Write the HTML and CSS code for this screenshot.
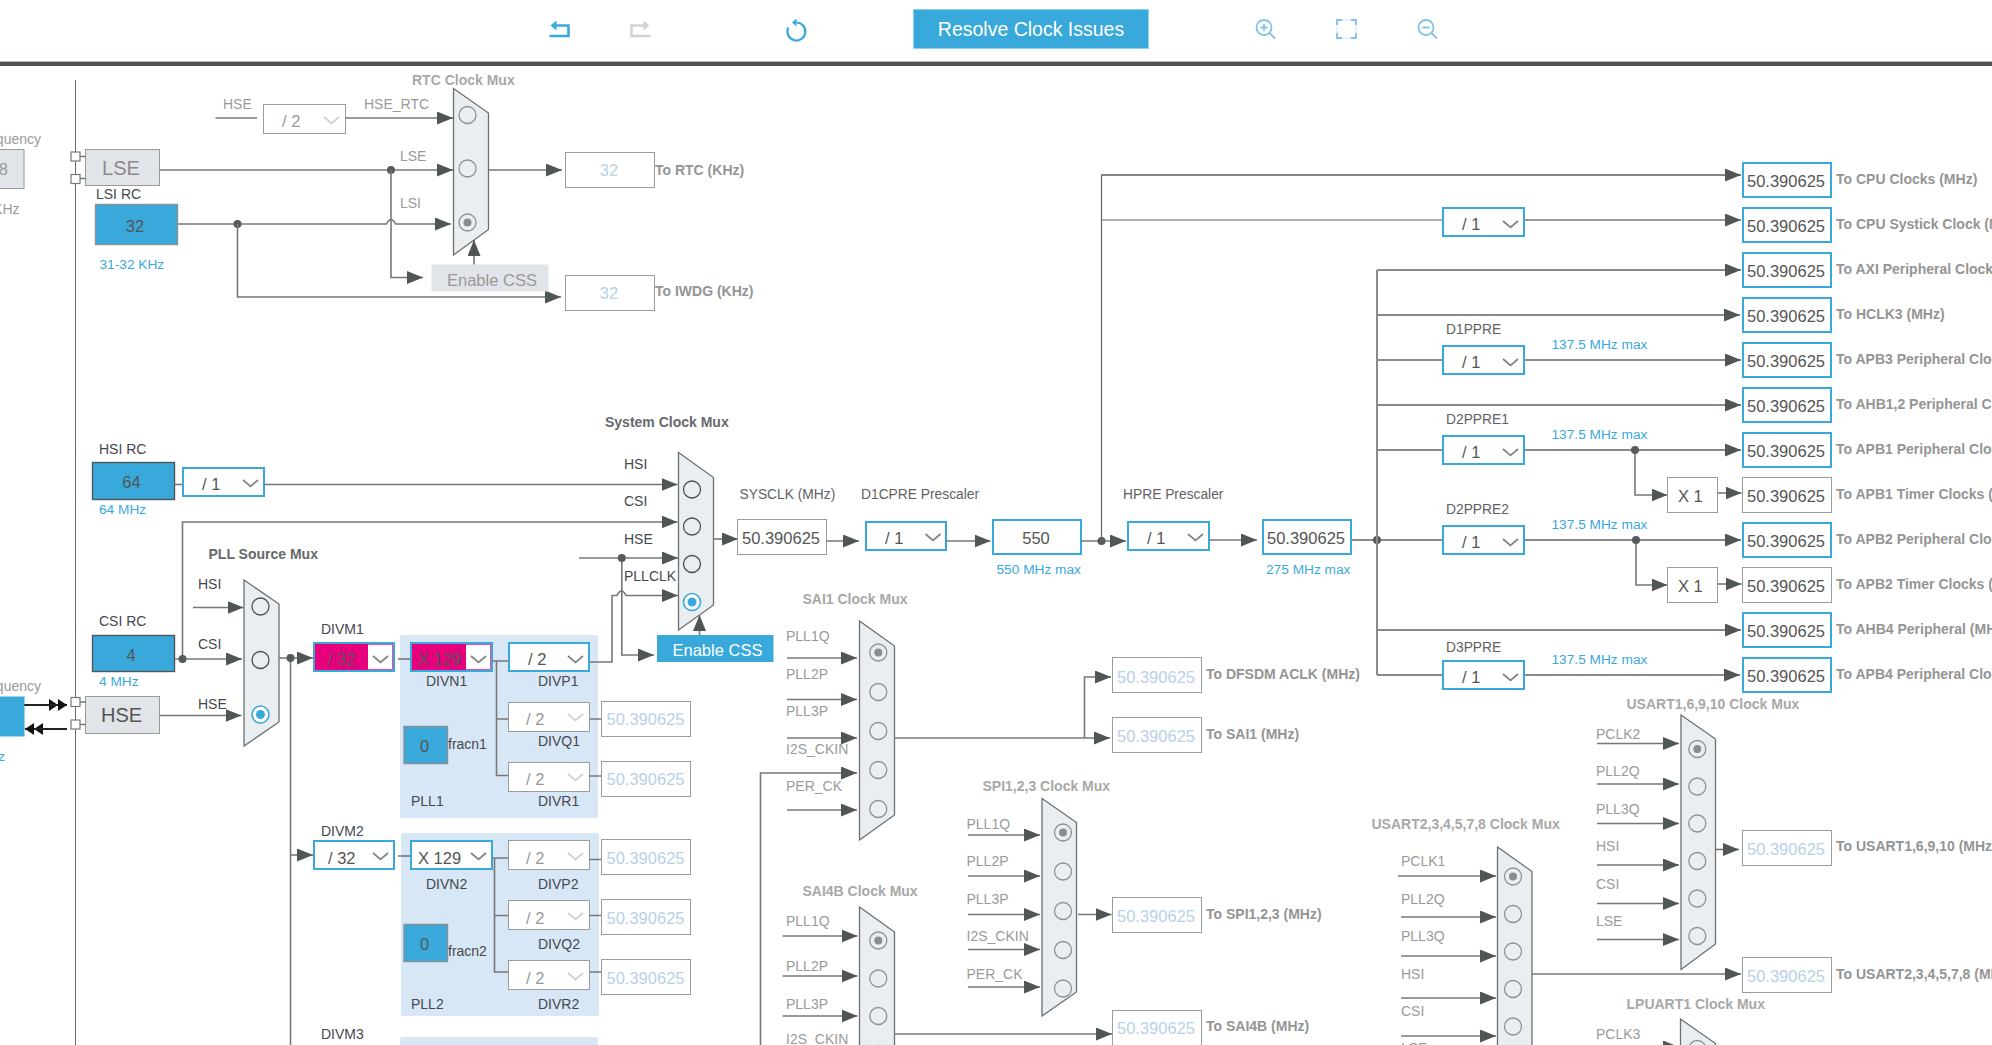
FILE: index.html
```html
<!DOCTYPE html>
<html lang="en">
<head>
<meta charset="utf-8">
<title>Clock Configuration</title>
<link rel="stylesheet" href="styles.css">
</head>
<body>
<header class="toolbar">
  <div class="history">
    <svg class="icon" width="21" height="18" viewBox="0 0 21 18"><path class="ib" d="M5 5.5H19.5V16H0.5"/><path class="if" d="M7.5 0.5 1.5 5.5 7.5 10.5z"/></svg>
    <svg class="icon off" width="21" height="18" viewBox="0 0 21 18"><path class="ig" d="M16 5.5H1.5V16H20.5"/><path class="igf" d="M13.5 0.5 19.5 5.5 13.5 10.5z"/></svg>
  </div>
  <svg class="icon refresh" width="21" height="24" viewBox="0 0 21 24"><path class="ib thin" d="M10.5 4.5A9 9 0 1 1 2.3 9.5"/><path class="if" d="M10.5 0.5V8.5L6 4.5z"/></svg>
  <button class="resolve" type="button">Resolve Clock Issues</button>
  <div class="zooms">
    <svg class="icon" width="21" height="20" viewBox="0 0 21 20"><circle class="iz" cx="9" cy="8.5" r="7.5"/><path class="iz" d="M14.5 14 20 19.500M5.500 8.500H12.500M9 5V12"/></svg>
    <svg class="icon" width="21" height="20" viewBox="0 0 21 20"><path class="iz dash" d="M1 1H20V19H1Z"/><path class="iz" d="M1 6V1H6M15 1H20V6M20 14V19H15M6 19H1V14"/></svg>
    <svg class="icon" width="21" height="20" viewBox="0 0 21 20"><circle class="iz" cx="9" cy="8.5" r="7.5"/><path class="iz" d="M14.5 14 20 19.500M5.500 8.500H12.500"/></svg>
  </div>
</header>
<main class="canvas">
<svg class="diagram" width="1992" height="979" viewBox="0 66 1992 979" xmlns="http://www.w3.org/2000/svg">
<defs>
  <marker id="ah" markerUnits="userSpaceOnUse" markerWidth="17" markerHeight="13" viewBox="0 0 17 13" refX="16" refY="6.500" orient="auto"><path class="head" d="M0 0 16 6.500 0 13z"/></marker>
  <marker id="abk" markerUnits="userSpaceOnUse" markerWidth="10" markerHeight="13" viewBox="0 0 10 13" refX="9" refY="6.500" orient="auto"><path class="headk" d="M0 0.5 9 6.500 0 12.500z"/></marker>
  <path id="ch" d="M0 0 7.500 6.500 15 0"/>
</defs>

<!-- left edge -->
<path class="edge" d="M75.500 80V1045"/>
<rect class="chip" x="-2" y="149.500" width="26" height="39"/>
<text class="v mute" x="8" y="175" text-anchor="end">32.768</text>
<text class="gl" x="41" y="144" text-anchor="end">Input frequency</text>
<text class="gl" x="19.500" y="214" text-anchor="end">32 KHz</text>
<rect class="chip" x="85.500" y="149.500" width="74" height="36"/>
<text class="pin mute" x="121" y="175" text-anchor="middle">LSE</text>
<path class="w" d="M80 156.500H86M80 178.500H86"/>
<rect class="sq" x="71" y="152" width="9" height="9"/><rect class="sq" x="71" y="174.500" width="9" height="9"/>

<text class="lb" x="96" y="199">LSI RC</text>
<rect class="src soft" x="95.500" y="204.500" width="82" height="40"/>
<text class="v" x="135" y="232" text-anchor="middle">32</text>
<text class="bl" x="99.500" y="269">31-32 KHz</text>

<!-- RTC mux -->
<text class="tt off" x="412" y="85">RTC Clock Mux</text>
<text class="gl" x="223" y="109">HSE</text>
<path class="w" d="M215.500 118H257"/>
<rect class="dd-off" x="263.500" y="104.500" width="82" height="29"/>
<text class="v mute" x="282" y="127">/ 2</text>
<use href="#ch" class="chv-off" x="324" y="117"/>
<text class="gl" x="364" y="109">HSE_RTC</text>
<path class="w a" d="M345.500 118H453"/>
<text class="gl" x="400" y="161">LSE</text>
<path class="w a" d="M159.500 170H453"/>
<circle class="dot" cx="391" cy="170" r="4"/>
<text class="gl" x="400" y="208">LSI</text>
<path class="w a" d="M177.500 224H386.500q4.500-9 9 0H451"/>
<circle class="dot" cx="237.500" cy="224" r="4"/>
<path class="w a" d="M391 170V277.500H423"/>
<path class="w a" d="M237.500 224V297H561"/>
<polygon class="mux" points="453.500,88.500 488.500,113 488.500,229.500 453.500,255"/>
<circle class="c" cx="467.500" cy="115" r="8.500"/><circle class="c" cx="467.500" cy="168.500" r="8.500"/><circle class="c" cx="467.500" cy="222.500" r="8.500"/><circle class="cd" cx="467.500" cy="222.500" r="4"/>
<rect class="css-off" x="431.500" y="264.500" width="117" height="27"/>
<text class="v mute" x="447" y="286">Enable CSS</text>
<path class="w a" d="M474 264.500V240"/>
<path class="w a" d="M488.500 170H562"/>
<rect class="vb" x="565.500" y="152.500" width="89" height="35"/><text class="vd" x="609" y="176" text-anchor="middle">32</text>
<text class="to" x="655" y="175">To RTC (KHz)</text>
<rect class="vb" x="565.500" y="275.500" width="89" height="35"/><text class="vd" x="609" y="299" text-anchor="middle">32</text>
<text class="to" x="655" y="296">To IWDG (KHz)</text>

<!-- HSI / CSI / HSE sources -->
<text class="lb" x="99" y="454">HSI RC</text>
<rect class="src" x="92.500" y="462.500" width="82" height="37"/>
<text class="v" x="131.500" y="488" text-anchor="middle">64</text>
<text class="bl" x="99" y="514">64 MHz</text>
<path class="w" d="M174.500 484.500H183"/>
<rect class="dd" x="183" y="468" width="81" height="28"/>
<text class="v" x="202" y="490">/ 1</text>
<use href="#ch" class="chv" x="243" y="480"/>
<path class="w a" d="M264.500 484.500H677.500"/>
<path class="w a" d="M182.500 659V522H677.500"/>
<text class="lb" x="99" y="626">CSI RC</text>
<rect class="src" x="92.500" y="635.500" width="82" height="36"/>
<text class="v" x="131" y="661" text-anchor="middle">4</text>
<text class="bl" x="99" y="686">4 MHz</text>
<rect class="chip" x="85.500" y="696.500" width="74" height="37"/>
<text class="pin" x="121.500" y="722" text-anchor="middle">HSE</text>
<path class="w" d="M80 702H86M80 724.500H86"/>
<rect class="sq" x="71" y="697.500" width="9" height="9"/><rect class="sq" x="71" y="720" width="9" height="9"/>
<rect class="src-plain" x="-2" y="696.500" width="26.500" height="40"/>
<text class="gl" x="41" y="691" text-anchor="end">Input frequency</text>
<text class="bl" x="5" y="761" text-anchor="end">4-48 MHz</text>
<path class="wk ak" d="M24.500 705H58"/><path class="wk ak" d="M24.500 705H67"/>
<path class="wk ak" d="M67 729H34"/><path class="wk ak" d="M67 729H25"/>

<!-- PLL source mux -->
<text class="tt" x="208.500" y="559">PLL Source Mux</text>
<text class="lb" x="198" y="589">HSI</text><path class="w a" d="M193 607.500H243.500"/>
<text class="lb" x="198" y="649">CSI</text><path class="w a" d="M174.500 659H242"/>
<circle class="dot" cx="182.500" cy="659" r="4"/>
<text class="lb" x="198" y="709">HSE</text><path class="w a" d="M159.500 715.500H241.500"/>
<polygon class="mux" points="244,580 279,604 279,722 244,746"/>
<circle class="c dk" cx="260.500" cy="606.500" r="8.500"/><circle class="c dk" cx="260.500" cy="660" r="8.500"/><circle class="cb" cx="260.500" cy="714.500" r="8.500"/><circle class="cbd" cx="260.500" cy="714.500" r="4.500"/>
<path class="w" d="M279 658H291"/>
<path class="w a" d="M290.500 658H313"/>
<path class="w" d="M290.500 658V1045"/>
<circle class="dot" cx="290.500" cy="658" r="4"/>
<path class="w a" d="M290.500 855H313"/>

<!-- PLL1 -->
<rect class="pll" x="400" y="635" width="198" height="183" rx="2"/>
<text class="lb" x="321" y="634">DIVM1</text>
<rect class="dd" x="314" y="643" width="80" height="28"/>
<rect class="err" x="315.500" y="644.500" width="77" height="25"/><rect class="errf" x="315" y="644" width="53" height="26"/>
<text class="v" x="328" y="665">/ 32</text>
<use href="#ch" class="chv" x="373" y="656"/>
<path class="w" d="M398 659H410"/>
<rect class="dd" x="411" y="643" width="81" height="28"/>
<rect class="err" x="412.500" y="644.500" width="78" height="25"/><rect class="errf" x="412" y="644" width="54" height="26"/>
<text class="v" x="418" y="665">X 129</text>
<use href="#ch" class="chv" x="471" y="656"/>
<text class="lb" x="426" y="686">DIVN1</text>
<path class="w" d="M492.500 661H509M496.500 661V775.500H509M496.500 719H509"/>
<rect class="dd" x="509" y="643" width="80" height="28"/>
<text class="v" x="528" y="665">/ 2</text>
<use href="#ch" class="chv" x="568" y="656"/>
<text class="lb" x="538" y="686">DIVP1</text>
<rect class="dd-off" x="508.500" y="702.500" width="81" height="29"/>
<text class="v mute" x="526" y="725">/ 2</text>
<use href="#ch" class="chv-off" x="568" y="714"/>
<text class="lb" x="538" y="746">DIVQ1</text>
<rect class="dd-off" x="508.500" y="762.500" width="81" height="29"/>
<text class="v mute" x="526" y="785">/ 2</text>
<use href="#ch" class="chv-off" x="568" y="774"/>
<text class="lb" x="538" y="806">DIVR1</text>
<rect class="src soft" x="404" y="726.500" width="43.500" height="37"/>
<text class="v" x="424.500" y="752" text-anchor="middle">0</text>
<text class="lb" x="448" y="749">fracn1</text>
<text class="lb" x="411" y="806">PLL1</text>
<path class="w" d="M589.500 719H601M589.500 776H601"/>
<rect class="vb" x="601.500" y="701.500" width="89" height="35"/><text class="vd" x="606.500" y="725">50.390625</text>
<rect class="vb" x="601.500" y="761.500" width="89" height="35"/><text class="vd" x="606.500" y="785">50.390625</text>

<!-- PLL2 -->
<rect class="pll" x="401" y="833" width="198" height="183" rx="2"/>
<text class="lb" x="321" y="836">DIVM2</text>
<rect class="dd" x="314" y="841" width="80" height="28"/>
<text class="v" x="328" y="863.500">/ 32</text>
<use href="#ch" class="chv" x="373" y="853"/>
<path class="w" d="M398 856H410"/>
<rect class="dd" x="411" y="841" width="81" height="28"/>
<text class="v" x="418" y="863.500">X 129</text>
<use href="#ch" class="chv" x="471" y="853"/>
<text class="lb" x="426" y="889">DIVN2</text>
<path class="w" d="M492.500 858H508M494.500 858V972H508M494.500 915.500H508"/>
<rect class="dd-off" x="508.500" y="840.500" width="81" height="29"/>
<text class="v mute" x="526" y="863.500">/ 2</text>
<use href="#ch" class="chv-off" x="568" y="853"/>
<text class="lb" x="538" y="889">DIVP2</text>
<rect class="dd-off" x="508.500" y="900.500" width="81" height="29"/>
<text class="v mute" x="526" y="923.500">/ 2</text>
<use href="#ch" class="chv-off" x="568" y="913"/>
<text class="lb" x="538" y="949">DIVQ2</text>
<rect class="dd-off" x="508.500" y="960.500" width="81" height="29"/>
<text class="v mute" x="526" y="983.500">/ 2</text>
<use href="#ch" class="chv-off" x="568" y="973"/>
<text class="lb" x="538" y="1009">DIVR2</text>
<rect class="src soft" x="404" y="924.500" width="43.500" height="37"/>
<text class="v" x="424.500" y="950" text-anchor="middle">0</text>
<text class="lb" x="448" y="956">fracn2</text>
<text class="lb" x="411" y="1009">PLL2</text>
<path class="w" d="M589.500 859.500H601M589.500 915.500H601M589.500 972H601"/>
<rect class="vb" x="601.500" y="839.500" width="89" height="35"/><text class="vd" x="606.500" y="863.500">50.390625</text>
<rect class="vb" x="601.500" y="899.500" width="89" height="35"/><text class="vd" x="606.500" y="923.500">50.390625</text>
<rect class="vb" x="601.500" y="959.500" width="89" height="35"/><text class="vd" x="606.500" y="983.500">50.390625</text>

<!-- PLL3 -->
<text class="lb" x="321" y="1039">DIVM3</text>
<rect class="pll" x="400" y="1037" width="198" height="40" rx="2"/>

<!-- System clock mux -->
<text class="tt" x="605" y="427">System Clock Mux</text>
<text class="lb" x="624" y="469">HSI</text>
<text class="lb" x="624" y="506">CSI</text>
<text class="lb" x="624" y="543.500">HSE</text>
<text class="lb" x="624" y="581">PLLCLK</text>
<path class="w a" d="M579 558H678"/>
<path class="w a" d="M589.500 662H612V595.500H617q4.500-9 9 0H678"/>
<path class="w a" d="M621.800 558V655H654"/>
<circle class="dot" cx="621.800" cy="558" r="4"/>
<polygon class="mux" points="678.500,452.500 713.500,477.500 713.500,605 678.500,630"/>
<circle class="c dk" cx="692" cy="489.500" r="8.500"/><circle class="c dk" cx="692" cy="526.500" r="8.500"/><circle class="c dk" cx="692" cy="564" r="8.500"/><circle class="cb" cx="692" cy="602" r="8.500"/><circle class="cbd" cx="692" cy="602" r="4.500"/>
<path class="w a" d="M699.500 635V615"/>
<rect class="css" x="657" y="635" width="116.500" height="27"/>
<text class="css-t" x="672.500" y="656">Enable CSS</text>
<path class="w a" d="M713.500 539H738"/>
<text class="lb2" x="739.500" y="499">SYSCLK (MHz)</text>
<text class="lb2" x="861" y="499">D1CPRE Prescaler</text>
<text class="lb2" x="1123" y="499">HPRE Prescaler</text>
<rect class="vb" x="737.500" y="519.500" width="89" height="35"/><text class="v" x="742" y="544">50.390625</text>
<path class="w a" d="M826.500 541H859"/>
<rect class="dd" x="866" y="522" width="80" height="28"/>
<text class="v" x="885" y="543.500">/ 1</text>
<use href="#ch" class="chv" x="925.500" y="534"/>
<path class="w a" d="M946.500 541H990.500"/>
<rect class="vbb" x="993" y="520" width="88" height="34"/><text class="v" x="1036" y="544" text-anchor="middle">550</text>
<text class="bl" x="996.500" y="574">550 MHz max</text>
<path class="w a" d="M1081 541H1126"/>
<circle class="dot" cx="1101.500" cy="541" r="4"/>
<path class="thin-w" d="M1101.500 541V175H1741"/>
<path class="thin-w" d="M1101.500 220H1442"/>
<rect class="dd" x="1128" y="522" width="81" height="28"/>
<text class="v" x="1147" y="543.500">/ 1</text>
<use href="#ch" class="chv" x="1188" y="534"/>
<path class="w a" d="M1209.500 540H1257"/>
<rect class="vbb" x="1263" y="520" width="88" height="34"/><text class="v" x="1267" y="544">50.390625</text>
<text class="bl" x="1266" y="574">275 MHz max</text>
<path class="w2" d="M1351.500 540H1442"/>
<circle class="dot" cx="1377" cy="540" r="4"/>

<!-- Right column: bus -->
<path class="w2" d="M1377 675V270"/>
<path class="ak2" d="M1101.500 175H1741"/>
<path class="ak2" d="M1524.500 220H1741"/>
<path class="ak2 w2b" d="M1377 270H1741"/>
<path class="ak2 w2b" d="M1377 315H1740"/>
<path class="w2" d="M1377 360H1442"/><path class="ak2 w2b" d="M1524.500 360H1741"/>
<path class="ak2 w2b" d="M1377 405H1741"/>
<path class="w2" d="M1377 450H1442"/><path class="ak2 w2b" d="M1524.500 450H1741"/>
<path class="ak2 w2b" d="M1524.500 540H1741"/>
<path class="ak2 w2b" d="M1377 630H1741"/>
<path class="w2" d="M1377 675H1442"/><path class="ak2 w2b" d="M1524.500 675H1740"/>
<path class="w a" d="M1635 450V495H1667.500"/>
<circle class="dot" cx="1635" cy="450" r="4"/>
<path class="w a" d="M1636 540V585H1667.500"/>
<circle class="dot" cx="1636" cy="540" r="4"/>
<rect class="vb" x="1667.500" y="477.500" width="50" height="35"/><text class="v" x="1678" y="502">X 1</text>
<rect class="vb" x="1667.500" y="567.500" width="50" height="35"/><text class="v" x="1678" y="592">X 1</text>
<path class="w a" d="M1717.500 493H1741.500"/>
<path class="w a" d="M1717.500 584H1741.500"/>

<rect class="dd" x="1443" y="208" width="81" height="28"/><text class="v" x="1462" y="229.500">/ 1</text><use href="#ch" class="chv" x="1503" y="221"/>
<text class="lb2" x="1446" y="334">D1PPRE</text>
<rect class="dd" x="1443" y="346" width="81" height="28"/><text class="v" x="1462" y="367.500">/ 1</text><use href="#ch" class="chv" x="1503" y="359"/>
<text class="bl" x="1551.500" y="349">137.5 MHz max</text>
<text class="lb2" x="1446" y="424">D2PPRE1</text>
<rect class="dd" x="1443" y="436" width="81" height="28"/><text class="v" x="1462" y="457.500">/ 1</text><use href="#ch" class="chv" x="1503" y="449"/>
<text class="bl" x="1551.500" y="439">137.5 MHz max</text>
<text class="lb2" x="1446" y="514">D2PPRE2</text>
<rect class="dd" x="1443" y="526" width="81" height="28"/><text class="v" x="1462" y="547.500">/ 1</text><use href="#ch" class="chv" x="1503" y="539"/>
<text class="bl" x="1551.500" y="529">137.5 MHz max</text>
<text class="lb2" x="1446" y="651.500">D3PPRE</text>
<rect class="dd" x="1443" y="661" width="81" height="28"/><text class="v" x="1462" y="682.500">/ 1</text><use href="#ch" class="chv" x="1503" y="674"/>
<text class="bl" x="1551.500" y="664">137.5 MHz max</text>

<rect class="vbb" x="1743" y="163" width="88" height="34"/><text class="v" x="1747" y="187">50.390625</text><text class="to" x="1836" y="184">To CPU Clocks (MHz)</text>
<rect class="vbb" x="1743" y="208" width="88" height="34"/><text class="v" x="1747" y="232">50.390625</text><text class="to" x="1836" y="229">To CPU Systick Clock (MHz)</text>
<rect class="vbb" x="1743" y="253" width="88" height="34"/><text class="v" x="1747" y="277">50.390625</text><text class="to" x="1836" y="274">To AXI Peripheral Clocks (MHz)</text>
<rect class="vbb" x="1743" y="298" width="88" height="34"/><text class="v" x="1747" y="322">50.390625</text><text class="to" x="1836" y="319">To HCLK3 (MHz)</text>
<rect class="vbb" x="1743" y="343" width="88" height="34"/><text class="v" x="1747" y="367">50.390625</text><text class="to" x="1836" y="364">To APB3 Peripheral Clocks (MHz)</text>
<rect class="vbb" x="1743" y="388" width="88" height="34"/><text class="v" x="1747" y="412">50.390625</text><text class="to" x="1836" y="409">To AHB1,2 Peripheral Clocks (MHz)</text>
<rect class="vbb" x="1743" y="433" width="88" height="34"/><text class="v" x="1747" y="457">50.390625</text><text class="to" x="1836" y="454">To APB1 Peripheral Clocks (MHz)</text>
<rect class="vb" x="1742.500" y="477.500" width="89" height="35"/><text class="v" x="1747" y="502">50.390625</text><text class="to" x="1836" y="499">To APB1 Timer Clocks (MHz)</text>
<rect class="vbb" x="1743" y="523" width="88" height="34"/><text class="v" x="1747" y="547">50.390625</text><text class="to" x="1836" y="544">To APB2 Peripheral Clocks (MHz)</text>
<rect class="vb" x="1742.500" y="567.500" width="89" height="35"/><text class="v" x="1747" y="592">50.390625</text><text class="to" x="1836" y="589">To APB2 Timer Clocks (MHz)</text>
<rect class="vbb" x="1743" y="613" width="88" height="34"/><text class="v" x="1747" y="637">50.390625</text><text class="to" x="1836" y="634">To AHB4 Peripheral (MHz)</text>
<rect class="vbb" x="1743" y="658" width="88" height="34"/><text class="v" x="1747" y="682">50.390625</text><text class="to" x="1836" y="679">To APB4 Peripheral Clocks (MHz)</text>

<!-- SAI1 -->
<text class="tt off" x="802.500" y="604">SAI1 Clock Mux</text>
<text class="gl" x="786" y="641">PLL1Q</text><path class="w a" d="M787 658H857"/>
<text class="gl" x="786" y="679">PLL2P</text><path class="w a" d="M787 699.500H857"/>
<text class="gl" x="786" y="716">PLL3P</text><path class="w a" d="M787 738H857"/>
<text class="gl" x="786" y="754">I2S_CKIN</text><path class="w a" d="M760.500 1045V773H857"/>
<text class="gl" x="786" y="791">PER_CK</text><path class="w a" d="M787 810H857"/>
<polygon class="mux" points="859.500,621 894.500,646 894.500,815 859.500,840"/>
<circle class="c" cx="878.300" cy="652.500" r="8.500"/><circle class="cd" cx="878.300" cy="652.500" r="4"/><circle class="c" cx="878.300" cy="692" r="8.500"/><circle class="c" cx="878.300" cy="731" r="8.500"/><circle class="c" cx="878.300" cy="770" r="8.500"/><circle class="c" cx="878.300" cy="809" r="8.500"/>
<path class="w a" d="M894.500 738H1110"/>
<path class="w a" d="M1084.500 738V677H1111"/>
<rect class="vb" x="1112.500" y="657.500" width="89" height="35"/><text class="vd" x="1117" y="682.500">50.390625</text>
<text class="to" x="1206" y="679">To DFSDM ACLK (MHz)</text>
<rect class="vb" x="1112.500" y="717.500" width="89" height="35"/><text class="vd" x="1117" y="742">50.390625</text>
<text class="to" x="1206" y="739">To SAI1 (MHz)</text>

<!-- SPI -->
<text class="tt off" x="982.500" y="791">SPI1,2,3 Clock Mux</text>
<text class="gl" x="966.500" y="829">PLL1Q</text><path class="w a" d="M968 835H1040"/>
<text class="gl" x="966.500" y="866">PLL2P</text><path class="w a" d="M968 876H1040"/>
<text class="gl" x="966.500" y="904">PLL3P</text><path class="w a" d="M968 914.500H1040"/>
<text class="gl" x="966.500" y="941">I2S_CKIN</text><path class="w a" d="M968 949.500H1040"/>
<text class="gl" x="966.500" y="979">PER_CK</text><path class="w a" d="M968 987H1040"/>
<polygon class="mux" points="1042,798.500 1076.500,822.500 1076.500,992 1042,1016"/>
<circle class="c" cx="1063" cy="832.500" r="8.500"/><circle class="cd" cx="1063" cy="832.500" r="4"/><circle class="c" cx="1063" cy="871.500" r="8.500"/><circle class="c" cx="1063" cy="911" r="8.500"/><circle class="c" cx="1063" cy="950" r="8.500"/><circle class="c" cx="1063" cy="988.500" r="8.500"/>
<path class="w a" d="M1078 914.500H1111.500"/>
<rect class="vb" x="1112.500" y="897.500" width="89" height="35"/><text class="vd" x="1117" y="922">50.390625</text>
<text class="to" x="1206" y="919">To SPI1,2,3 (MHz)</text>

<!-- SAI4B -->
<text class="tt off" x="802.500" y="896">SAI4B Clock Mux</text>
<text class="gl" x="786" y="926">PLL1Q</text><path class="w a" d="M782.500 936H857.500"/>
<text class="gl" x="786" y="971">PLL2P</text><path class="w a" d="M782.500 976H857.500"/>
<text class="gl" x="786" y="1009">PLL3P</text><path class="w a" d="M782.500 1016H857.500"/>
<text class="gl" x="786" y="1044">I2S_CKIN</text>
<polygon class="mux" points="859.500,907 894.500,932 894.500,1090 859.500,1090"/>
<circle class="c" cx="878.300" cy="940.500" r="8.500"/><circle class="cd" cx="878.300" cy="940.500" r="4"/><circle class="c" cx="878.300" cy="978.500" r="8.500"/><circle class="c" cx="878.300" cy="1016" r="8.500"/><circle class="c" cx="878.300" cy="1054" r="8.500"/>
<path class="w a" d="M894.500 1034H1112"/>
<rect class="vb" x="1112.500" y="1010.500" width="89" height="40"/><text class="vd" x="1117" y="1033.500">50.390625</text>
<text class="to" x="1206" y="1031">To SAI4B (MHz)</text>

<!-- USART1 -->
<text class="tt off" x="1626.500" y="709">USART1,6,9,10 Clock Mux</text>
<text class="gl" x="1596" y="739">PCLK2</text><path class="w a" d="M1597 743.500H1679"/>
<text class="gl" x="1596" y="776">PLL2Q</text><path class="w a" d="M1597 784H1679"/>
<text class="gl" x="1596" y="814">PLL3Q</text><path class="w a" d="M1597 823.500H1679"/>
<text class="gl" x="1596" y="851">HSI</text><path class="w a" d="M1597 865H1679"/>
<text class="gl" x="1596" y="889">CSI</text><path class="w a" d="M1597 903.500H1679"/>
<text class="gl" x="1596" y="926">LSE</text><path class="w a" d="M1597 939.500H1679"/>
<polygon class="mux" points="1681,715 1715.500,739 1715.500,944 1681,969.500"/>
<circle class="c" cx="1697.300" cy="749" r="8.500"/><circle class="cd" cx="1697.300" cy="749" r="4"/><circle class="c" cx="1697.300" cy="786.500" r="8.500"/><circle class="c" cx="1697.300" cy="823.500" r="8.500"/><circle class="c" cx="1697.300" cy="861" r="8.500"/><circle class="c" cx="1697.300" cy="898.500" r="8.500"/><circle class="c" cx="1697.300" cy="936" r="8.500"/>
<path class="w a" d="M1715.500 849.500H1739"/>
<rect class="vb" x="1742.500" y="830.500" width="89" height="35"/><text class="vd" x="1747" y="854.500">50.390625</text>
<text class="to" x="1836" y="851">To USART1,6,9,10 (MHz)</text>

<!-- USART2 -->
<text class="tt off" x="1371.500" y="829">USART2,3,4,5,7,8 Clock Mux</text>
<text class="gl" x="1401" y="866">PCLK1</text><path class="w a" d="M1398 876H1496"/>
<text class="gl" x="1401" y="904">PLL2Q</text><path class="w a" d="M1401 917H1496"/>
<text class="gl" x="1401" y="941">PLL3Q</text><path class="w a" d="M1401 956H1496"/>
<text class="gl" x="1401" y="979">HSI</text><path class="w a" d="M1401 998H1496"/>
<text class="gl" x="1401" y="1016">CSI</text><path class="w a" d="M1401 1036H1496"/>
<text class="gl" x="1401" y="1053">LSE</text>
<polygon class="mux" points="1497.500,847 1532,871.500 1532,1100 1497.500,1100"/>
<circle class="c" cx="1513" cy="876.500" r="8.500"/><circle class="cd" cx="1513" cy="876.500" r="4"/><circle class="c" cx="1513" cy="914" r="8.500"/><circle class="c" cx="1513" cy="951.500" r="8.500"/><circle class="c" cx="1513" cy="989" r="8.500"/><circle class="c" cx="1513" cy="1026.500" r="8.500"/>
<path class="w a" d="M1532 974H1741"/>
<rect class="vb" x="1742.500" y="957.500" width="89" height="35"/><text class="vd" x="1747" y="982">50.390625</text>
<text class="to" x="1836" y="979">To USART2,3,4,5,7,8 (MHz)</text>

<!-- LPUART1 -->
<text class="tt off" x="1626.500" y="1009">LPUART1 Clock Mux</text>
<text class="gl" x="1596" y="1039">PCLK3</text><path class="w a" d="M1597 1047H1679"/>
<polygon class="mux" points="1680.500,1019 1715.500,1043.500 1715.500,1100 1680.500,1100"/>
<circle class="c" cx="1697.300" cy="1049" r="8.500"/><circle class="cd" cx="1697.300" cy="1049" r="4"/>
</svg>
</main>
</body>
</html>
```
FILE: styles.css
```css
* { box-sizing: border-box; }
html, body { margin: 0; padding: 0; height: 100%; overflow: hidden; background: #fff; }
body { font-family: "Liberation Sans", Arial, sans-serif; }

.toolbar { display: flex; align-items: center; height: 66px; padding: 0 0 4px 549px; background: #fff; border-bottom: 4px solid #4f5353; box-shadow: inset 0 -1px 0 #b9bcbc; }
.history { display: flex; gap: 60px; }
.refresh { margin-left: 135px; margin-top: 2px; }
.resolve { margin-left: 106px; width: 236px; height: 40px; padding: 0; background: #39a9dc; border: 1px solid #8fd0ee; color: #fff; font: 19.5px "Liberation Sans", Arial, sans-serif; }
.zooms { display: flex; gap: 60px; margin-left: 106px; }
.icon { display: block; overflow: visible; }
.ib { fill: none; stroke: #39a9dc; stroke-width: 2.6; }
.ib.thin { stroke-width: 2.2; }
.if { fill: #39a9dc; }
.ig { fill: none; stroke: #d2d2d2; stroke-width: 2.6; }
.igf { fill: #d2d2d2; }
.iz { fill: none; stroke: #7fc4e6; stroke-width: 1.8; }
.iz.dash { stroke: #cfe7f4; stroke-width: 1; }

.canvas { display: block; width: 1992px; height: 979px; overflow: hidden; }
.diagram { display: block; }
.diagram text { font-family: "Liberation Sans", Arial, sans-serif; }

.edge { stroke: #6a6a6a; stroke-width: 1; fill: none; }
.w { fill: none; stroke: #777; stroke-width: 1.6; }
.w2 { fill: none; stroke: #8a8a8a; stroke-width: 2; }
.thin-w { fill: none; stroke: #666; stroke-width: 1.2; }
.wk { fill: none; stroke: #222; stroke-width: 2; }
.a { marker-end: url(#ah); }
.ak { marker-end: url(#abk); }
.ak2 { fill: none; stroke: #777; stroke-width: 1.6; marker-end: url(#ah); }
.ak2.w2b { stroke: #8a8a8a; stroke-width: 2; }
.head { fill: #505555; }
.headk { fill: #111; }
.dot { fill: #555a5d; }

.chip { fill: #e1e4e8; stroke: #9a9a9a; stroke-width: 1; }
.sq { fill: #fff; stroke: #777; stroke-width: 1.2; }
.src { fill: #39a9dc; stroke: #505558; stroke-width: 1.4; }
.src.soft { stroke: #8a8f93; }
.src-plain { fill: #39a9dc; stroke: none; }
.pll { fill: #d8e7f5; }
.mux { fill: #eaeef1; stroke: #6b7073; stroke-width: 1.3; }
.c { fill: none; stroke: #8f9295; stroke-width: 1.3; }
.c.dk { stroke: #4c4f52; }
.cd { fill: #8a8d90; }
.cb { fill: #fff; stroke: #39a9dc; stroke-width: 1.6; }
.cbd { fill: #39a9dc; }

.dd { fill: #fff; stroke: #39a9dc; stroke-width: 2; }
.dd-off { fill: #fff; stroke: #9a9da0; stroke-width: 1; }
.err { fill: none; stroke: #e6007e; stroke-width: .7; }
.errf { fill: #e6007e; }
.chv { fill: none; stroke: #808385; stroke-width: 1.7; }
.chv-off { fill: none; stroke: #cfd0d1; stroke-width: 1.7; }
.vb { fill: #fff; stroke: #9a9da0; stroke-width: 1; }
.vbb { fill: #fff; stroke: #39a9dc; stroke-width: 2; }
.css { fill: #39a9dc; }
.css-off { fill: #e1e4e8; }

.v { font-size: 16.5px; fill: #555; }
.v.mute { fill: #999; }
.vd { font-size: 16.5px; fill: #b9d0e8; }
.pin { font-size: 20px; fill: #555; }
.pin.mute { fill: #8b8b8b; }
.css-t { font-size: 16.5px; fill: #fff; }
.lb { font-size: 14px; fill: #45474f; }
.lb2 { font-size: 13.8px; fill: #5f6166; }
.gl { font-size: 14px; fill: #9a9a9a; }
.bl { font-size: 13.7px; fill: #39a9dc; }
.tt { font-size: 14px; font-weight: 700; fill: #66686c; }
.tt.off { fill: #a8a8a8; }
.to { font-size: 14px; font-weight: 700; fill: #949494; }
```
